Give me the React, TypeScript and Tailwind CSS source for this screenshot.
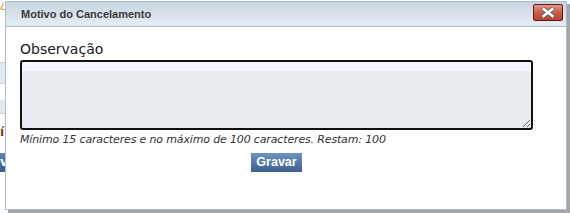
import React from 'react';

// Background page strip peeking out on the left of the modal
function BackPage() {
  return (
    <div className="absolute inset-0 bg-white">
      <div className="absolute left-0 top-0 text-[10px] leading-none text-[#d08a00]">¿</div>
      <div className="absolute left-0 top-[62px] w-[6px] h-[22px] bg-[#e4e9ef] border-y border-[#c9d3de]" />
      <div className="absolute left-0 top-[100px] w-[6px] h-[14px] bg-[#e4e9ef] border-b border-[#c9d3de]" />
      <div className="absolute left-0 top-[126px] text-[12px] font-bold leading-none text-[#6b4a1a]">í</div>
      <div className="absolute left-0 top-[153px] w-[6px] h-[19px] bg-gradient-to-b from-[#5d84b4] to-[#3d5e8c] text-white text-[12px] font-bold leading-[19px]">v</div>
    </div>
  );
}

export default function App() {
  return (
    <div
      className="relative w-[570px] h-[213px] overflow-hidden bg-white"
      style={{ fontFamily: '"DejaVu Sans", Verdana, sans-serif' }}
    >
      <BackPage />

      {/* Modal */}
      <div className="absolute left-[5px] top-[1px] w-[562px] h-[209px] bg-white border border-[#a9bdd8] shadow-[3px_3px_0_#a6a6a6] flex flex-col">
        {/* Title bar */}
        <div className="h-[25px] flex items-center justify-between pl-[15px] pr-[3px] bg-gradient-to-b from-[#c9d4e0] to-[#e6edf5] border-b border-[#a9bdd6]">
          <span className="font-['Liberation_Sans',Arial,sans-serif] text-[11px] font-bold text-[#3a3a3a]">Motivo do Cancelamento</span>
          <button className="w-[30px] h-[17px] mb-[3px] rounded-[2px] border border-[#5a1d1d] bg-gradient-to-b from-[#e49486] via-[#cf5a45] to-[#b8452f] flex items-center justify-center">
            <svg width="16" height="11" viewBox="0 0 16 11">
              <path d="M3.5 2 L12.5 9 M12.5 2 L3.5 9" stroke="#666666" strokeWidth="4.2" strokeLinecap="square" />
              <path d="M3.5 2 L12.5 9 M12.5 2 L3.5 9" stroke="#ffffff" strokeWidth="2.4" strokeLinecap="square" />
            </svg>
          </button>
        </div>

        {/* Body */}
        <div className="flex flex-col pl-[14px] pr-[33px] pt-[13px]">
          <label className="text-[14px] leading-[18px] text-[#1a1a1a]">Observação</label>
          <textarea
            className="mt-[2px] h-[70px] w-full rounded-[3px] border-2 border-[#111111] bg-gradient-to-b from-[#f3f7fd] from-[14%] to-[#e9edf2] to-[14%] outline-none resize"
          />
          <p className="mt-[3px] text-[11px] italic leading-[14px] tracking-[-0.15px] text-[#333333]">
            Mínimo 15 caracteres e no máximo de 100 caracteres. Restam: 100
          </p>
          <div className="flex justify-center mt-[6px]">
            <button className="h-[19px] px-[5px] bg-gradient-to-b from-[#6d95c4] to-[#3e5f8e] text-white font-['Liberation_Sans',Arial,sans-serif] text-[12.5px] font-bold leading-[19px]">
              Gravar
            </button>
          </div>
        </div>
      </div>
    </div>
  );
}
